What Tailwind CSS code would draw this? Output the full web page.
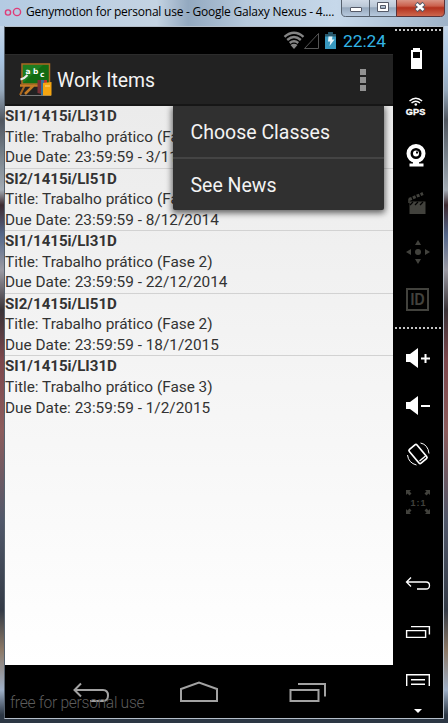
<!DOCTYPE html>
<html lang="en">
<head>
<meta charset="utf-8">
<title>Genymotion</title>
<script src="https://cdn.jsdelivr.net/npm/@tailwindcss/browser@4"></script>
</head>
<body class="w-[448px] h-[723px] overflow-hidden font-['Roboto',sans-serif]">
<div class="w-[448px] h-[723px] flex flex-col bg-[linear-gradient(180deg,#b5cbe1_0,#c4d6e9_26px,#a9c5e2_60px,#97aabd_90px,#50565f_120px,#7d8790_160px,#a3abb4_190px,#3e2a30_205px,#54678a_235px,#9b9aa3_270px,#3a3337_310px,#7c474c_360px,#8c5c5c_430px,#51586a_520px,#343b46_610px,#8b7866_650px,#9fb0c7_690px,#2c3744_715px)]">
  <header class="h-[26px] shrink-0 flex justify-between bg-[linear-gradient(90deg,#b4cbe3,#c4d3e2_35%,#93a9c0_42%,#b6c9dc_55%,#c6d8ea_75%,#9fb3c8)]">
    <div class="flex items-start">
      <svg class="w-[26px] h-[26px] shrink-0" viewBox="0 0 26 26" fill="none" stroke="#df3c78" stroke-width="1.4"><circle cx="8" cy="12.5" r="2.6"/><circle cx="17" cy="12" r="3.6"/></svg>
      <div class="text-[12px] leading-[24px] whitespace-nowrap text-black font-['Open_Sans',sans-serif] tracking-[-0.23px]">Genymotion for personal use - Google Galaxy Nexus - 4....</div>
    </div>
    <svg class="w-[108px] h-[18px] shrink-0 mr-[1px]" viewBox="339 0 108 18">
      <defs>
        <linearGradient id="g" x2="0" y2="1"><stop offset="0" stop-color="#d2dce8"/><stop offset=".45" stop-color="#bac7d6"/><stop offset=".5" stop-color="#96a8bc"/><stop offset="1" stop-color="#b9cbe0"/></linearGradient>
        <linearGradient id="r" x2="0" y2="1"><stop offset="0" stop-color="#dc9c8e"/><stop offset=".4" stop-color="#cb604c"/><stop offset=".5" stop-color="#b3311d"/><stop offset="1" stop-color="#cf6a50"/></linearGradient>
      </defs>
      <path d="M341.500-1V12q0 4.500 4 4.500H369.500V-1zM369.500-1H396.500V16.500H369.500z" fill="url(#g)" stroke="#56616e"/>
      <path d="M396.500-1H444.500V12q0 4.500-4 4.500H396.500z" fill="url(#r)" stroke="#5a3238"/>
      <rect x="350.500" y="7.500" width="11" height="4" rx=".5" fill="#fff" stroke="#555a68"/>
      <path d="M377.500 2.500h11v9h-11zM380.500 5.500v3h5v-3z" fill="#fff" fill-rule="evenodd" stroke="#555a68"/>
      <path d="M416 3.500l8 7M424 3.500l-8 7" stroke="#555a68" stroke-width="4.500"/><path d="M416.500 4l7 6M423.500 4l-7 6" stroke="#fff" stroke-width="2.500"/>
    </svg>
  </header>
  <div class="flex grow mx-[4px] mb-[4px] border-t border-l border-b border-r border-[#b4bec9] border-l-[#56616d]">
    <main class="w-[388px] shrink-0 flex flex-col bg-black">
      <div class="h-[27px] shrink-0 flex justify-end">
        <svg class="w-[60px] h-[27px]" viewBox="280 27 60 27">
          <g fill="none" stroke="#858585" stroke-width="2.400"><path d="M284.500 36.800Q294 28.600 303.500 36.800"/><path d="M287.200 40Q294 34.200 300.800 40"/><path d="M289.700 43Q294 39.400 298.300 43"/></g>
          <path d="M294 49l-3.500-4q3.500-2.500 7 0z" fill="#858585"/>
          <path d="M304.500 48.500h14v-15z" fill="none" stroke="#555"/>
          <path d="M325 34h3.500v-2h4v2h3.500v15h-11z" fill="#3798bf"/><path d="M325 34h3.500v-2h4v2h3.500v2.500h-11z" fill="#28586c"/>
          <path d="M328.500 36.500h4l-.5 3h2.500l-5 6.500.8-4.500h-2.300z" fill="#e4f4fa"/>
        </svg>
        <div class="w-[53px] pl-[3px] text-[17.300px] leading-[28px] text-[#33b5e5]">22:24</div>
      </div>
      <div class="h-[52px] shrink-0 flex items-center bg-[#222] border-b-2 border-[#161616] border-t border-t-[#2c2c2c]">
        <svg class="w-[52px] h-[49px] shrink-0" viewBox="5 55 52 49">
          <path d="M26 83l-6 12M42 83l5 12" stroke="#a8651d" stroke-width="2"/><path d="M20 85.500h22M35 84l-10 10" stroke="#c47b25" stroke-width="2.500"/>
          <path d="M20 95.500h31" stroke="#777" stroke-width="1"/>
          <rect x="22" y="64" width="27.500" height="20" fill="#126b12" stroke="#aa6b25" stroke-width="1.500"/>
          <path d="M23 83V65h20z" fill="#25892b" opacity=".6"/>
          <g fill="#fff" font-family="DejaVu Sans" font-weight="bold" font-size="7.5"><text x="25.500" y="74">a</text><text x="33" y="73.500">b</text><text x="40" y="76.500">c</text></g>
          <path d="M20.500 79.500q4-1 7-4.500" stroke="#eee" stroke-width="2" fill="none"/>
          <path d="M37.500 80h4v14l-4-1z" fill="#7c3036"/><path d="M41 80h3v15h-3z" fill="#386f95"/><path d="M44 80h3v4h-3z" fill="#c3332b"/><path d="M43 83l8.500-1v13.500H43z" fill="#f5a510"/><path d="M45 86h5" stroke="#ffe18a"/>
        </svg>
        <div class="grow pt-[3px] text-[19.400px] text-[#f3f3f3]">Work Items</div>
        <div class="flex flex-col gap-[2px] mr-[27px] mt-[1px]">
          <i class="size-[6px] bg-[#929292]"></i><i class="size-[6px] bg-[#929292]"></i><i class="size-[6px] bg-[#929292]"></i>
        </div>
      </div>
      <div class="h-[559px] shrink-0 relative bg-linear-to-b from-[#ebebeb] to-white overflow-hidden text-[15.370px] leading-[20.600px] text-[#333] whitespace-nowrap">
        <div class="h-[62.600px] border-b border-[#d2d2d2]"><b class="block text-[15.100px]">SI1/1415i/LI31D</b><p>Title: Trabalho prático (Fase 1)</p><p>Due Date: 23:59:59 - 3/11/2014</p></div>
        <div class="h-[62.600px] border-b border-[#d2d2d2]"><b class="block text-[15.100px]">SI2/1415i/LI51D</b><p>Title: Trabalho prático (Fase 1)</p><p>Due Date: 23:59:59 - 8/12/2014</p></div>
        <div class="h-[62.600px] border-b border-[#d2d2d2]"><b class="block text-[15.100px]">SI1/1415i/LI31D</b><p>Title: Trabalho prático (Fase 2)</p><p>Due Date: 23:59:59 - 22/12/2014</p></div>
        <div class="h-[62.600px] border-b border-[#d2d2d2]"><b class="block text-[15.100px]">SI2/1415i/LI51D</b><p>Title: Trabalho prático (Fase 2)</p><p>Due Date: 23:59:59 - 18/1/2015</p></div>
        <div class="h-[62.600px]"><b class="block text-[15.100px]">SI1/1415i/LI31D</b><p>Title: Trabalho prático (Fase 3)</p><p>Due Date: 23:59:59 - 1/2/2015</p></div>
        <div class="absolute left-[168px] top-0 w-[211px] h-[104px] rounded-b-[2px] bg-[#303030] shadow-[0_2px_6px_1px_#0009] text-[19.500px] text-[#f3f3f3] flex flex-col">
          <div class="h-[53px] pl-[17.500px] border-b-2 border-[#444] leading-[54px]">Choose Classes</div>
          <div class="h-[51px] pl-[17.500px] leading-[54px]">See News</div>
        </div>
      </div>
      <div class="grow relative">
        <svg class="w-[388px] h-[53px]" viewBox="5 665 388 53" fill="none" stroke="#a2a2a2" stroke-width="2">
          <path d="M81 683.500l-6.500 6.500 6.500 6.500M75 690h28q5 0 5 5.500t-5 5.500H90"/>
          <path d="M181 701v-12l18-6.500 18 6.500v12z"/>
          <path d="M290.500 690h28v11h-28zM298 684h27v12.500"/>
        </svg>
        <div class="absolute left-[5px] top-[28px] text-[15.600px] tracking-[-0.300px] leading-[20px] font-light text-[#5c5c5c] whitespace-nowrap">free for personal use</div>
      </div>
    </main>
    <aside class="grow bg-black flex flex-col">
      <svg class="w-[50px] h-[8px]" viewBox="393 27 50 8"><path d="M395 30h46" stroke="#c4c4c4" stroke-width="2" stroke-dasharray="2 2"/></svg>
      <svg class="w-[50px] h-[48px]" viewBox="393 35 50 48"><path d="M413 48h7v2h2v19h-11V50h2zM413 52v6h7v-6z" fill="#fff" fill-rule="evenodd"/></svg>
      <svg class="w-[50px] h-[48px]" viewBox="393 83 50 48"><g fill="none" stroke="#fff" stroke-width="1.400"><path d="M409.500 101q6.300-5.500 12.600 0M411.500 103q4.300-3.500 8.600 0"/></g><circle cx="415.800" cy="104.500" r="1.300" fill="#fff"/><text x="405.800" y="114.800" fill="#fff" font-family="Liberation Sans" font-weight="bold" font-size="9" stroke="#fff" stroke-width=".3" textLength="19.500" lengthAdjust="spacingAndGlyphs">GPS</text></svg>
      <svg class="w-[50px] h-[48px]" viewBox="393 131 50 48"><circle cx="416" cy="153.500" r="7.500" fill="none" stroke="#fff" stroke-width="4"/><circle cx="416" cy="153.500" r="3" fill="#fff"/><path d="M416 153.500h2v-2h-2z" fill="#000"/><path d="M413 161h6v2.500h4.500v3h-14v-3h3.500z" fill="#fff"/></svg>
      <svg class="w-[50px] h-[48px]" viewBox="393 179 50 48"><path d="M409.500 201.500h16V214h-16z" fill="#42423d"/><path d="M409 199.500l14-6" stroke="#42423d" stroke-width="3" stroke-dasharray="3 1.200"/><path d="M410 205l3-3M415 205l3-3M420 205l3-3" stroke="#000" stroke-width="1.300"/><path d="M409 199v4" stroke="#42423d" stroke-width="1.500"/></svg>
      <svg class="w-[50px] h-[48px]" viewBox="393 227 50 48" fill="#42423d"><circle cx="418" cy="252" r="3"/><path d="M415 245h6l-3-5zM415 259h6l-3 5zM411 249v6l-5-3zM425 249v6l5-3z"/></svg>
      <svg class="w-[50px] h-[48px]" viewBox="393 275 50 48"><rect x="407" y="289" width="21" height="21" fill="none" stroke="#42423d" stroke-width="2"/><text x="410.500" y="305.200" fill="#42423d" font-family="Liberation Sans" font-weight="bold" font-size="16" textLength="14" lengthAdjust="spacingAndGlyphs">ID</text></svg>
      <svg class="w-[50px] h-[11px]" viewBox="393 323 50 11"><path d="M395 328h46" stroke="#c4c4c4" stroke-width="2" stroke-dasharray="2 2"/></svg>
      <svg class="w-[50px] h-[48px]" viewBox="393 334 50 48"><path d="M406 354h4l8-6v20l-8-6h-4z" fill="#fff"/><path d="M421 358.500h9M425.500 354v9" stroke="#fff" stroke-width="2"/></svg>
      <svg class="w-[50px] h-[48px]" viewBox="393 382 50 48"><path d="M406 402h4l8-6v19l-8-6h-4z" fill="#fff"/><path d="M421 406h9" stroke="#fff" stroke-width="2"/></svg>
      <svg class="w-[50px] h-[48px]" viewBox="393 430 50 48" fill="none" stroke="#fff"><rect x="413" y="445" width="10" height="18" rx="1.500" stroke-width="1.700" transform="rotate(-40 418 454)"/><path d="M419.500 461l6-5" stroke-width="1.300"/><path d="M420.500 443q7.500 1.500 8.500 10.500M407.500 455q1 8 9 10"/></svg>
      <svg class="w-[50px] h-[48px]" viewBox="393 478 50 48"><path d="M406 490h5l-1.500 1.500 2 2-2 2-2-2L406 495zM430 490h-5l1.500 1.500-2 2 2 2 2-2L430 495zM406 514h5l-1.500-1.500 2-2-2-2-2 2L406 509zM430 514h-5l1.500-1.500-2-2 2-2 2 2L430 509z" fill="#42423d"/><text x="410.500" y="505.500" fill="#42423d" font-family="Liberation Sans" font-weight="bold" font-size="9" textLength="15">1:1</text></svg>
      <div class="h-[33px] shrink-0"></div>
      <svg class="w-[50px] h-[48px]" viewBox="393 559 50 48" fill="none" stroke="#fff" stroke-width="1.300"><path d="M411 577.500l-4.500 4.500 4.500 4.500M407 582h19q3.500 0 3.500 3.500t-3.500 3.500h-9"/></svg>
      <svg class="w-[50px] h-[48px]" viewBox="393 607 50 48" fill="none" stroke="#fff" stroke-width="1.400"><path d="M406.600 630.600h19v6.800h-19zM411 626.600h18.400v8"/></svg>
      <svg class="w-[50px] h-[48px]" viewBox="393 655 50 48" fill="none" stroke="#fff" stroke-width="1.400"><path d="M406.700 686v-11.300h22.600V686M411 679.700h14M411 684.300h14"/></svg>
      <svg class="w-[50px] h-[15px]" viewBox="393 703 50 15"><path d="M414 709h8l-4 4z" fill="#fff"/></svg>
    </aside>
  </div>
</div>
</body>
</html>
